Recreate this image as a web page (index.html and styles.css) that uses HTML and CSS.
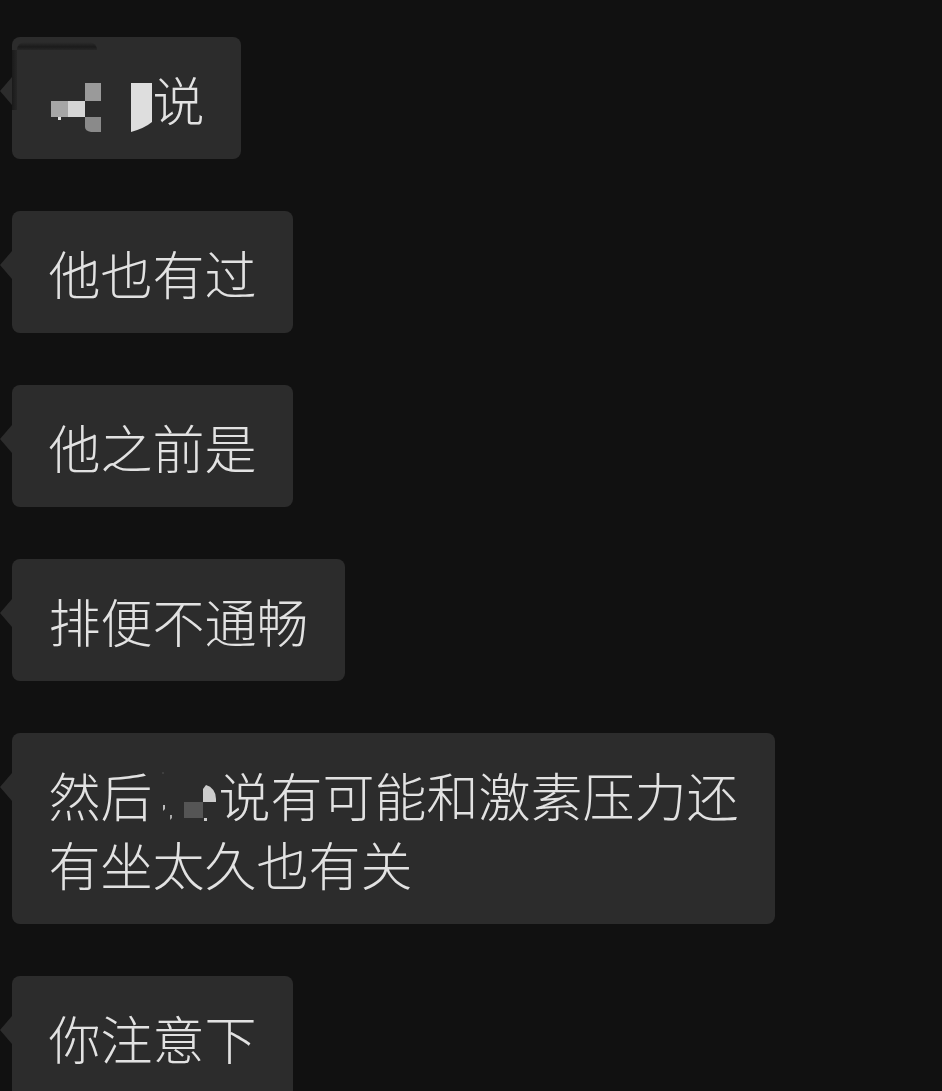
FILE: index.html
```html
<!DOCTYPE html>
<html lang="zh-CN">
<head>
<meta charset="utf-8">
<link rel="stylesheet" href="styles.css">
</head>
<body>
<div class="chat">
  <div class="bubble first"><span class="patch"></span><span class="mask"><svg width="104" height="69" viewBox="0 0 104 69"><rect x="2" y="37" width="17" height="16" fill="#a6a6a6"/><rect x="19" y="37" width="17" height="16" fill="#d6d6d6"/><rect x="36" y="19" width="16" height="18" fill="#9a9a9a"/><path d="M36 53 H52 V68 H42 Q36 67 36 63 Z" fill="#8a8a8a"/><rect x="9" y="53" width="3" height="3" fill="#dddddd"/><path d="M82 19 H103 V58 Q96 64 82 68 Z" fill="#dedede"/></svg></span>说</div>
  <div class="bubble">他也有过</div>
  <div class="bubble">他之前是</div>
  <div class="bubble">排便不通畅</div>
  <div class="bubble">然后<span class="mask small"><svg width="66" height="69" viewBox="0 0 66 69"><circle cx="10" cy="13" r="1" fill="#444"/><path d="M10 45 h2 v4 l-2 2 z" fill="#bbbbbb"/><path d="M17 55 h2 v3 l-2 2 z" fill="#aaaaaa"/><rect x="31" y="42" width="19" height="16" fill="#555555"/><path d="M50 42 V29 L53 25 A13 14 0 0 1 63 39 V42 Z" fill="#cccccc"/><rect x="51" y="58" width="3" height="3" fill="#cccccc"/></svg></span>说有可能和激素压力还<br>有坐太久也有关</div>
  <div class="bubble">你注意下</div>
</div>
</body>
</html>
```
FILE: styles.css
```css
html, body {
  margin: 0;
  padding: 0;
  background: #111111;
  overflow: hidden;
  height: 1091px;
}
.chat {
  display: flex;
  flex-direction: column;
  align-items: flex-start;
  gap: 52px;
  padding: 37px 0 0 12px;
}
.bubble {
  position: relative;
  background: #2c2c2c;
  color: #e2e2e2;
  font-family: "Noto Sans CJK SC", "Noto Sans", sans-serif;
  font-weight: 300;
  font-size: 52px;
  line-height: 69px;
  padding: 26.5px 36.5px;
  border-radius: 8px;
  white-space: nowrap;
}
.bubble::before {
  content: "";
  position: absolute;
  left: -12px;
  top: 40px;
  border-right: 12px solid #2c2c2c;
  border-top: 14px solid transparent;
  border-bottom: 14px solid transparent;
}
.mask {
  display: inline-block;
  width: 104px;
  height: 69px;
  vertical-align: top;
}
.mask svg {
  display: block;
}
.mask.small {
  width: 66px;
}
.patch {
  position: absolute;
  left: 5px;
  top: 5px;
  width: 80px;
  height: 8px;
  border-radius: 8px 8px 0 0;
  background: linear-gradient(#2c2c2c, #1b1b1b 60%, #262626);
}
.first::after {
  content: "";
  position: absolute;
  left: 0;
  top: 13px;
  width: 5px;
  height: 60px;
  background: linear-gradient(90deg, #1a1a1a, #262626);
}
```
